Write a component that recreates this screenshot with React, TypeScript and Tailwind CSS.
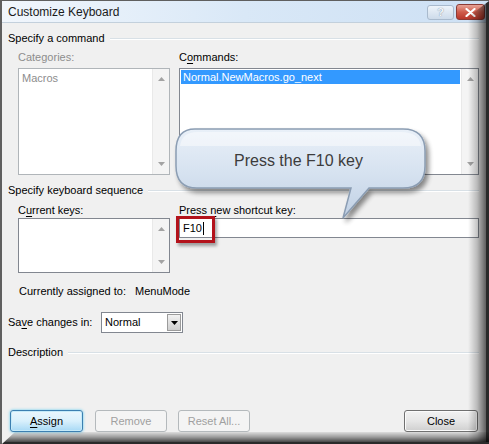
import React from 'react';

function Ul({ children }: { children: React.ReactNode }) {
  return <span className="underline underline-offset-2">{children}</span>;
}

function GroupHeader({ label }: { label: string }) {
  return (
    <div className="flex items-center gap-[5px] h-[15px] pr-[2px]">
      <span className="leading-[15px] whitespace-nowrap">{label}</span>
      <div className="flex-1 h-px bg-[#d8e0e6] shadow-[0_1px_0_#ffffff]" />
    </div>
  );
}

function Arrow({ up, color = '#a3a3a3' }: { up?: boolean; color?: string }) {
  return (
    <svg width="7" height="4" viewBox="0 0 7 4">
      <polygon points={up ? '0,4 7,4 3.5,0' : '0,0 7,0 3.5,4'} fill={color} />
    </svg>
  );
}

function ScrollTrack() {
  return (
    <div className="w-[17px] h-full flex flex-col items-center justify-between py-[8px] bg-[#f4f4f4] border-l border-[#e9e9e9]">
      <Arrow up />
      <Arrow />
    </div>
  );
}

function DialogButton({
  children,
  disabled,
  focused,
  width,
}: {
  children: React.ReactNode;
  disabled?: boolean;
  focused?: boolean;
  width: string;
}) {
  const base = 'h-[22px] rounded-[3px] flex items-center justify-center border leading-none';
  if (disabled)
    return (
      <div className={`${base} ${width} border-[#b4b9bc] bg-[#f4f4f4] text-[#a0a0a0]`}>{children}</div>
    );
  if (focused)
    return (
      <div
        className={`${base} ${width} border-[#3c7fb1] bg-gradient-to-b from-[#eaf6fd] via-[#d9f0fc] to-[#a7d9f5] shadow-[0_0_3px_#5ecbf0,inset_0_0_0_1px_#c5eaf9]`}
      >
        {children}
      </div>
    );
  return (
    <div
      className={`${base} ${width} border-[#707070] bg-gradient-to-b from-[#f2f2f2] via-[#e6e6e6] to-[#cfcfcf] shadow-[inset_0_0_0_1px_#fbfbfb]`}
    >
      {children}
    </div>
  );
}

function Callout() {
  return (
    <div className="absolute left-[171px] top-[125px] w-[262px] h-[100px]">
      <svg width="262" height="100" viewBox="0 0 262 100" className="absolute inset-0">
        <defs>
          <linearGradient id="bub" x1="0" y1="0" x2="0" y2="1">
            <stop offset="0" stopColor="#e9f0f8" />
            <stop offset="0.5" stopColor="#d6e2f0" />
            <stop offset="1" stopColor="#c0d0e4" />
          </linearGradient>
          <filter id="sh" x="-10%" y="-10%" width="130%" height="140%">
            <feGaussianBlur in="SourceAlpha" stdDeviation="2.5" />
            <feOffset dx="3" dy="4" result="b" />
            <feComponentTransfer>
              <feFuncA type="linear" slope="0.45" />
            </feComponentTransfer>
            <feMerge>
              <feMergeNode />
              <feMergeNode in="SourceGraphic" />
            </feMerge>
          </filter>
        </defs>
        <path
          d="M22 3 H230 Q252 3 252 25 V40 Q252 62 230 62 H196 L170 92 L178 62 H24 Q3 62 3 40 V25 Q3 3 22 3 Z"
          fill="url(#bub)"
          stroke="#8b9db3"
          strokeWidth="1.5"
          filter="url(#sh)"
        />
        <path d="M24 6 H228 Q246 6 248 20 H7 Q9 6 24 6 Z" fill="#ffffff" opacity="0.45" />
      </svg>
      <div className="absolute left-[61px] top-[25px] text-[16px] leading-[20px] text-[#3c3c3c] font-['Liberation_Sans',Arial,sans-serif]">
        Press the F10 key
      </div>
    </div>
  );
}

export default function App() {
  return (
    <div className="relative w-[489px] h-[444px] overflow-hidden bg-[#f0f0f0] border-l-2 border-t border-[#5f5f5f] text-[11px] text-black font-['Liberation_Sans',Arial,sans-serif] flex flex-col">
      {/* Title bar */}
      <div className="h-[22px] shrink-0 flex items-center pl-[6px] pr-[4px] bg-gradient-to-r from-[#f1f6fc] via-[#d9e8f7] to-[#cde0f4] border-b border-[#c3d0dc]">
        <span className="text-[12px] leading-none text-[#1a1a1a]">Customize Keyboard</span>
        <div className="ml-auto flex items-center gap-[2px] pt-[1px]">
          <div className="w-[27px] h-[15px] rounded-[3px] border border-[#a9bacd] bg-gradient-to-b from-[#eef4fa] to-[#cddbea] flex items-center justify-center text-[11px] font-bold text-[#f2f6fb] [text-shadow:0_0_1px_#5d6f86]">
            ?
          </div>
          <div className="w-[29px] h-[16px] rounded-[3px] border border-[#8c3b35] bg-gradient-to-b from-[#e6a397] via-[#cf5c4c] to-[#b9362a] flex items-center justify-center">
            <svg width="11" height="9" viewBox="0 0 11 9">
              <path d="M1.5 1 L9.5 8 M9.5 1 L1.5 8" stroke="#ffffff" strokeWidth="2.2" strokeLinecap="round" />
            </svg>
          </div>
        </div>
      </div>

      {/* Body */}
      <div className="flex-1 flex flex-col pl-[6px] pr-[8px] pb-[12px]">
        <div className="mt-[8px]">
          <GroupHeader label="Specify a command" />
        </div>

        <div className="mt-[4px] pl-[10px] flex gap-[9px]">
          <div className="w-[152px] flex flex-col">
            <span className="leading-[15px] text-[#8d8d8d]">Categories:</span>
            <div className="mt-[3px] h-[107px] border border-[#b0b5b9] bg-white flex">
              <div className="flex-1 pl-[3px] pt-[2px] leading-[14px] text-[#8d8d8d]">Macros</div>
              <ScrollTrack />
            </div>
          </div>
          <div className="w-[300px] flex flex-col">
            <span className="leading-[15px]">
              C<Ul>o</Ul>mmands:
            </span>
            <div className="mt-[3px] h-[107px] border border-[#828790] bg-white flex">
              <div className="flex-1 p-px">
                <div className="h-[14px] leading-[14px] pl-[2px] bg-[#3399ff] text-white">Normal.NewMacros.go_next</div>
              </div>
              <ScrollTrack />
            </div>
          </div>
        </div>

        <div className="mt-[8px]">
          <GroupHeader label="Specify keyboard sequence" />
        </div>

        <div className="mt-[5px] pl-[10px] flex gap-[9px]">
          <div className="w-[152px] flex flex-col">
            <span className="leading-[15px]">
              C<Ul>u</Ul>rrent keys:
            </span>
            <div className="h-[55px] border border-[#828790] bg-white flex justify-end">
              <ScrollTrack />
            </div>
          </div>
          <div className="w-[300px] flex flex-col">
            <span className="leading-[15px]">
              Press <Ul>n</Ul>ew shortcut key:
            </span>
            <div className="h-[20px] border border-[#828790] bg-white flex items-center pl-[3px]">
              <span className="leading-none">F10</span>
              <span className="ml-px w-px h-[13px] bg-black" />
            </div>
          </div>
        </div>

        <div className="mt-[11px] pl-[11px] flex gap-[9px] leading-[15px]">
          <span>Currently assigned to:</span>
          <span>MenuMode</span>
        </div>

        <div className="mt-[13px] flex items-center">
          <span className="leading-[15px] w-[93px] whitespace-nowrap">
            Sa<Ul>v</Ul>e changes in:
          </span>
          <div className="w-[82px] h-[21px] border border-[#828790] bg-white flex items-center">
            <span className="flex-1 pl-[3px] leading-none">Normal</span>
            <div className="w-[14px] h-[17px] mr-px border border-[#9b9b9b] bg-gradient-to-b from-[#f2f2f2] to-[#cfcfcf] flex items-center justify-center">
              <Arrow color="#000000" />
            </div>
          </div>
        </div>

        <div className="mt-[12px]">
          <GroupHeader label="Description" />
        </div>

        <div className="mt-auto pl-[2px] flex items-center">
          <DialogButton focused width="w-[73px]">
            <Ul>A</Ul>ssign
          </DialogButton>
          <div className="ml-[12px]">
            <DialogButton disabled width="w-[72px]">
              Remove
            </DialogButton>
          </div>
          <div className="ml-[11px]">
            <DialogButton disabled width="w-[72px]">
              Reset All...
            </DialogButton>
          </div>
          <div className="ml-auto mr-[3px]">
            <DialogButton width="w-[74px]">Close</DialogButton>
          </div>
        </div>
      </div>

      {/* Callout and highlight */}
      <Callout />
      <div className="absolute left-[174px] top-[215px] w-[39px] h-[27px] border-[3px] border-[#b3121b] shadow-[2px_3px_3px_rgba(0,0,0,0.35)]" />

      {/* Frame shadow */}
      <div className="absolute top-0 right-0 bottom-0 w-[21px] bg-gradient-to-r from-transparent via-[rgba(0,0,0,0.22)] to-[rgba(0,0,0,0.6)] border-r-[3px] border-[#2a2a2a] [clip-path:polygon(0_16px,100%_0,100%_100%,0_100%)]" />
      <div className="absolute left-0 right-0 bottom-0 h-[12px] bg-gradient-to-b from-[rgba(0,0,0,0.08)] via-[rgba(0,0,0,0.35)] to-[rgba(0,0,0,0.7)] border-b-2 border-[#2a2a2a] [clip-path:polygon(13px_0,100%_0,100%_100%,0_100%)]" />
    </div>
  );
}
